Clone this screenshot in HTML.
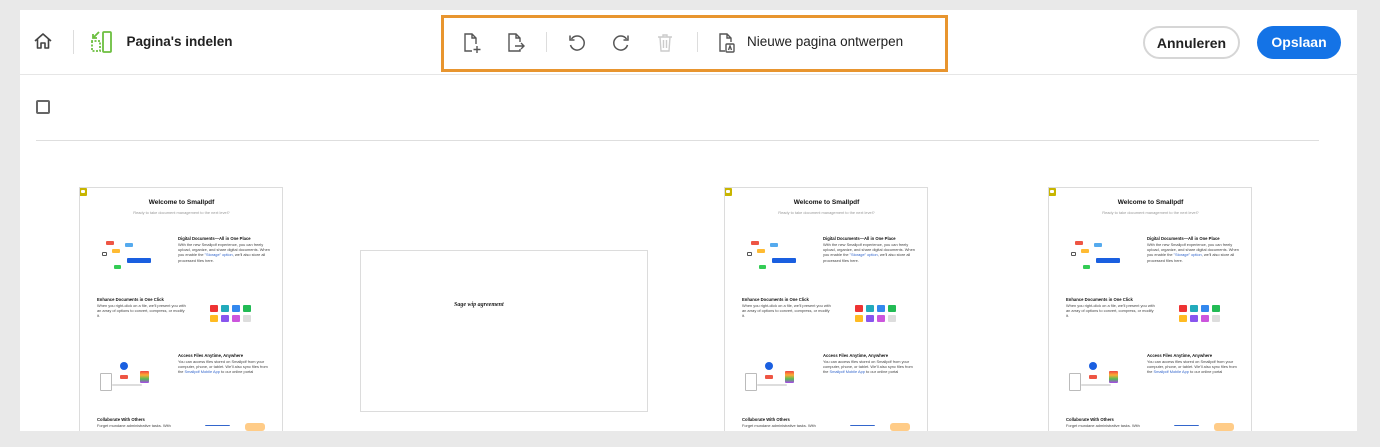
<!DOCTYPE html>
<html><head><meta charset="utf-8"><style>
*{margin:0;padding:0;box-sizing:border-box}
body{width:1380px;height:447px;background:#e9e9e9;font-family:"Liberation Sans",sans-serif;position:relative;overflow:hidden}
.panel{position:absolute;left:20px;top:10px;width:1337px;height:421px;background:#fff;overflow:hidden}
.abs{position:absolute}
.hdr{position:absolute;left:0;top:0;width:1337px;height:65px;border-bottom:1px solid #e6e6e6}
.btn{position:absolute;border-radius:17px;font-weight:bold;font-size:14px;text-align:center;line-height:30px}
.page{position:absolute;background:#fff;border:1px solid #dcdcdc;overflow:hidden}
.t{position:absolute;font-size:3.9px;line-height:5.2px;color:#444}
.h{position:absolute;font-size:4.2px;font-weight:bold;color:#111}
.chip{position:absolute;border-radius:1px}
</style></head><body>
<div class="panel">
 <div class="hdr">
  <svg class="abs" style="left:13px;top:21px" width="20" height="20" viewBox="0 0 20 20" fill="none" stroke="#444" stroke-width="1.6" stroke-linejoin="round"><path d="M2 10 L10 3 L18 10 M4.5 8 V17 H8 V12 H12 V17 H15.5 V8"/></svg>
  <div class="abs" style="left:53px;top:20px;width:1px;height:24px;background:#ddd"></div>
  <svg class="abs" style="left:70px;top:20px" width="24" height="24" viewBox="0 0 24 24" fill="none" stroke="#6cbf3f" stroke-width="1.8"><rect x="13" y="2" width="8" height="20" rx="1"/><path d="M2 11 V21 H10 V11 Z" stroke-dasharray="2 1.5"/><path d="M9 2 L3 8 M3 4 V8 H7"/></svg>
  <div class="abs" style="left:106.5px;top:24px;font-size:13.5px;font-weight:bold;color:#222">Pagina's indelen</div>
  <div class="abs" style="left:421px;top:5px;width:507px;height:57px;border:3px solid #e8952f"></div>
  <svg class="abs" style="left:442px;top:22px" width="20" height="22" viewBox="0 0 20 22" fill="none" stroke="#555" stroke-width="1.4"><path d="M10 19 H3 V2 H10 L14 6 V12 M10 2 V6 H14 M15 14 V21 M11.5 17.5 H18.5"/></svg>
  <svg class="abs" style="left:486px;top:22px" width="20" height="22" viewBox="0 0 20 22" fill="none" stroke="#555" stroke-width="1.4"><path d="M14 10 V6 L10 2 H3 V19 H14 V17 M10 2 V6 H14 M9 14 H18 M15 11 L18 14 L15 17"/></svg>
  <div class="abs" style="left:526px;top:22px;width:1px;height:20px;background:#ddd"></div>
  <svg class="abs" style="left:547px;top:23px" width="20" height="20" viewBox="0 0 20 20" fill="none" stroke="#555" stroke-width="1.5"><path d="M4.5 6 A7 7 0 1 1 3.5 12"/><path d="M3 2.5 V7 H7.5"/></svg>
  <svg class="abs" style="left:591px;top:23px" width="20" height="20" viewBox="0 0 20 20" fill="none" stroke="#555" stroke-width="1.5"><path d="M15.5 6 A7 7 0 1 0 16.5 12"/><path d="M17 2.5 V7 H12.5"/></svg>
  <svg class="abs" style="left:635px;top:22px" width="20" height="21" viewBox="0 0 20 21" fill="none" stroke="#ccc" stroke-width="1.4"><path d="M3 5 H17 M8 5 V3 H12 V5 M5 5 L6 19 H14 L15 5 M8.5 8 V16 M11.5 8 V16"/></svg>
  <div class="abs" style="left:677px;top:22px;width:1px;height:20px;background:#ddd"></div>
  <svg class="abs" style="left:697px;top:22px" width="20" height="22" viewBox="0 0 20 22" fill="none" stroke="#555" stroke-width="1.4"><path d="M8 19 H3 V2 H10 L14 6 V10 M10 2 V6 H14"/><rect x="9" y="12" width="8" height="8" rx="1"/><path d="M11.5 18 L13 14 L14.5 18"/></svg>
  <div class="abs" style="left:727px;top:24px;font-size:13.5px;color:#222">Nieuwe pagina ontwerpen</div>
  <div class="btn" style="left:1123px;top:16px;width:97px;height:33px;border:2px solid #d6d6d6;color:#222">Annuleren</div>
  <div class="btn" style="left:1237px;top:16px;width:84px;height:33px;background:#1473e6;color:#fff;line-height:33px">Opslaan</div>
 </div>
 <div class="abs" style="left:16px;top:90px;width:14px;height:14px;border:2px solid #666;border-radius:2px"></div>
 <div class="abs" style="left:16px;top:130px;width:1283px;height:1px;background:#dedede"></div>

 <div class="page" style="left:340px;top:240px;width:288px;height:162px">
  <div class="abs" style="left:93px;top:51px;font-family:'Liberation Serif',serif;font-style:italic;font-weight:bold;font-size:6px;color:#222">Sage wip agreement</div>
 </div>
</div>
<script>
var pg='<div class="chip" style="left:-1px;top:0;width:8px;height:8px;background:#c8b500"><div class="chip" style="left:2px;top:2px;width:4px;height:3px;background:#fff"></div></div>'+
'<div class="h" style="left:0;width:203px;top:11px;text-align:center;font-size:6.5px">Welcome to Smallpdf</div>'+
'<div class="t" style="left:0;width:203px;top:22px;text-align:center;color:#999">Ready to take document management to the next level?</div>'+
'<div class="chip" style="left:26px;top:53px;width:8px;height:4px;background:#e54"></div><div class="chip" style="left:45px;top:55px;width:8px;height:4px;background:#5ae"></div><div class="chip" style="left:32px;top:61px;width:8px;height:4px;background:#fb3"></div><div class="chip" style="left:47px;top:70px;width:24px;height:5px;background:#1a5fe0"></div><div class="chip" style="left:34px;top:77px;width:7px;height:4px;background:#3c5"></div><div class="chip" style="left:22px;top:64px;width:5px;height:4px;border:1px solid #555"></div>'+
'<div class="h" style="left:98px;top:48px">Digital Documents—All in One Place</div>'+
'<div class="t" style="left:98px;top:54px;width:96px">With the new Smallpdf experience, you can freely upload, organize, and share digital documents. When you enable the <span style="color:#36c">"Storage" option</span>, we\'ll also store all processed files here.</div>'+
'<div class="h" style="left:17px;top:109px">Enhance Documents in One Click</div>'+
'<div class="t" style="left:17px;top:115px;width:90px">When you right-click on a file, we\'ll present you with an array of options to convert, compress, or modify it.</div>'+
'<div class="chip" style="left:130px;top:117px;width:8px;height:7px;background:#e33"></div><div class="chip" style="left:141px;top:117px;width:8px;height:7px;background:#2ab"></div><div class="chip" style="left:152px;top:117px;width:8px;height:7px;background:#38e"></div><div class="chip" style="left:163px;top:117px;width:8px;height:7px;background:#2b5"></div><div class="chip" style="left:130px;top:127px;width:8px;height:7px;background:#fb2"></div><div class="chip" style="left:141px;top:127px;width:8px;height:7px;background:#85e"></div><div class="chip" style="left:152px;top:127px;width:8px;height:7px;background:#c5d"></div><div class="chip" style="left:163px;top:127px;width:8px;height:7px;background:#ddd"></div>'+
'<div class="chip" style="left:40px;top:174px;width:8px;height:8px;border-radius:50%;background:#1a5fe0"></div><div class="chip" style="left:20px;top:185px;width:12px;height:18px;border:1px solid #bbb"></div><div class="chip" style="left:40px;top:187px;width:8px;height:4px;background:#e54"></div><div class="chip" style="left:60px;top:183px;width:9px;height:12px;background:linear-gradient(#e44,#fa3,#5b5,#a4e)"></div><div class="chip" style="left:32px;top:196px;width:30px;height:2px;background:#ddd"></div>'+
'<div class="h" style="left:98px;top:165px">Access Files Anytime, Anywhere</div>'+
'<div class="t" style="left:98px;top:171px;width:96px">You can access files stored on Smallpdf from your computer, phone, or tablet. We\'ll also sync files from the <span style="color:#36c">Smallpdf Mobile App</span> to our online portal</div>'+
'<div class="h" style="left:17px;top:229px">Collaborate With Others</div>'+
'<div class="t" style="left:17px;top:235px;width:90px">Forget mundane administrative tasks. With</div>'+
'<div class="chip" style="left:165px;top:235px;width:20px;height:8px;border-radius:3px;background:#fc8"></div><div class="chip" style="left:125px;top:237px;width:25px;height:5px;border-top:1px solid #36c"></div>';
var p=document.querySelector('.panel');
[59,704,1028].forEach(function(x){var d=document.createElement('div');d.className='page';d.style.cssText='left:'+x+'px;top:177px;width:204px;height:260px';d.innerHTML=pg;p.appendChild(d);});
</script>
</body></html>
